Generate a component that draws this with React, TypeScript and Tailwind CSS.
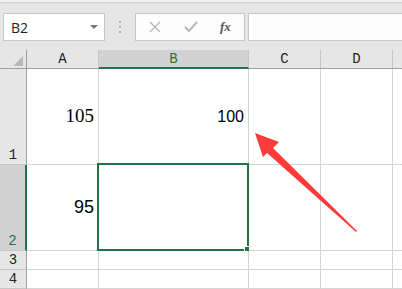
const GRID = "border-[#d4d4d4]";

const cols = [
  { key: "A", w: "w-[72px]" },
  { key: "B", w: "w-[150px]" },
  { key: "C", w: "w-[72px]" },
  { key: "D", w: "w-[72px]" },
];

function Toolbar() {
  return (
    <div className="h-[48px] shrink-0 border-t border-[#d4d4d4] bg-[#e6e6e6] pt-[10px]">
      <div className="flex h-[28px] items-stretch">
        {/* name box */}
        <div className="ml-[3px] flex w-[102px] items-center justify-between border border-[#c6c6c6] bg-white pl-[7px] pr-[6px]">
          <span className="text-[14px] text-[#222] [font-family:'Open_Sans',sans-serif]">B2</span>
          <svg width="8" height="5" viewBox="0 0 8 5">
            <polygon points="0,0 8,0 4,4" fill="#7a7a7a" />
          </svg>
        </div>
        {/* dots */}
        <div className="flex w-[30px] flex-col items-center justify-center gap-[3px]">
          <span className="h-[2px] w-[2px] bg-[#b0b0b0]" />
          <span className="h-[2px] w-[2px] bg-[#b0b0b0]" />
          <span className="h-[2px] w-[2px] bg-[#b0b0b0]" />
        </div>
        {/* formula buttons */}
        <div className="flex w-[110px] items-center border border-[#c6c6c6] bg-[#fdfdfd]">
          <svg className="ml-[13px]" width="12" height="12" viewBox="0 0 12 12">
            <path d="M1 1 L11 11 M11 1 L1 11" stroke="#b8b8b8" strokeWidth="1.4" />
          </svg>
          <svg className="ml-[23px]" width="14" height="12" viewBox="0 0 14 12">
            <path d="M1 6 L5 10 L13 1" stroke="#b8b8b8" strokeWidth="2" fill="none" />
          </svg>
          <span className="ml-[22px] text-[13px] font-bold italic text-[#555] [font-family:'Liberation_Serif',serif]">
            fx
          </span>
        </div>
        {/* formula input */}
        <div className="ml-[3px] flex-1 border border-r-0 border-[#c6c6c6] bg-[#fdfdfd]" />
      </div>
    </div>
  );
}

function HeaderRow() {
  return (
    <div className="flex h-[19px] shrink-0 border-b border-[#a0a0a0] bg-[#e6e6e6] text-[14px] leading-none [font-family:'Liberation_Mono',monospace]">
      <div className="flex w-[27px] items-end justify-end border-r border-[#a0a0a0] pb-[2px] pr-[3px]">
        <svg width="10" height="10" viewBox="0 0 10 10">
          <polygon points="10,0 10,10 0,10" fill="#b9b9b9" />
        </svg>
      </div>
      {cols.map((c) =>
        c.key === "B" ? (
          <div
            key={c.key}
            className={`${c.w} -mb-px flex items-center justify-center border-r border-b-2 border-r-[#c6c6c6] border-b-[#217346] bg-[#d2d2d2] text-[#217346]`}
          >
            {c.key}
          </div>
        ) : (
          <div key={c.key} className={`${c.w} flex items-center justify-center border-r border-[#c6c6c6] text-[#222]`}>
            {c.key}
          </div>
        )
      )}
      <div className="flex-1" />
    </div>
  );
}

function RowHead({ n, selected }: { n?: number; selected?: boolean }) {
  return (
    <div
      className={
        selected
          ? "flex w-[27px] items-end justify-center border-b border-r-2 border-b-[#c6c6c6] border-r-[#217346] bg-[#d2d2d2] pb-[2px] text-[#217346]"
          : "flex w-[27px] items-end justify-center border-b border-r border-b-[#c6c6c6] border-r-[#a0a0a0] bg-[#e6e6e6] pb-[2px] text-[#222]"
      }
    >
      <span className="text-[14px] leading-none [font-family:'Liberation_Mono',monospace]">{n}</span>
    </div>
  );
}

function Cell({ w, children, selected }: { w: string; children?: React.ReactNode; selected?: boolean }) {
  return (
    <div className={`${w} relative flex items-center justify-end border-r border-b ${GRID} bg-white pr-[4px]`}>
      {children}
      {selected && (
        <div className="pointer-events-none absolute -left-[2px] -top-[2px] -bottom-[1px] -right-[1px] border-2 border-[#217346]">
          <span className="absolute -bottom-[3px] -right-[3px] h-[6px] w-[6px] border border-white bg-[#217346]" />
        </div>
      )}
    </div>
  );
}

export default function App() {
  return (
    <div className="relative h-[289px] w-[402px] overflow-hidden bg-[#f1f1f1] pt-[2px]">
      <div className="flex h-full flex-col">
        <Toolbar />
        <HeaderRow />
        <div className="flex h-[96px] shrink-0">
          <RowHead n={1} />
          <Cell w="w-[72px]">
            <span className="text-[19px] text-black [font-family:'Liberation_Serif',serif]">105</span>
          </Cell>
          <Cell w="w-[150px]">
            <span className="text-[16px] text-black [font-family:'Liberation_Sans',Arial,sans-serif]">100</span>
          </Cell>
          <Cell w="w-[72px]" />
          <Cell w="w-[72px]" />
          <div className={`flex-1 border-b ${GRID} bg-white`} />
        </div>
        <div className="flex h-[86px] shrink-0">
          <RowHead n={2} selected />
          <Cell w="w-[72px]">
            <span className="text-[18px] text-black [font-family:'Liberation_Sans',Arial,sans-serif]">95</span>
          </Cell>
          <Cell w="w-[150px]" selected />
          <Cell w="w-[72px]" />
          <Cell w="w-[72px]" />
          <div className={`flex-1 border-b ${GRID} bg-white`} />
        </div>
        {[3, 4, 0].map((n) => (
          <div key={n} className="flex h-[19px] shrink-0">
            <RowHead n={n || undefined} />
            {cols.map((c) => (
              <Cell key={c.key} w={c.w} />
            ))}
            <div className={`flex-1 border-b ${GRID} bg-white`} />
          </div>
        ))}
      </div>
      {/* annotation arrow */}
      <svg className="pointer-events-none absolute left-0 top-0" width="402" height="289" viewBox="0 0 402 289">
        <polygon
          points="255,133 279,142 273,148 357,231 356,232 267,153 263,157"
          fill="#fe3b3b"
        />
      </svg>
    </div>
  );
}
